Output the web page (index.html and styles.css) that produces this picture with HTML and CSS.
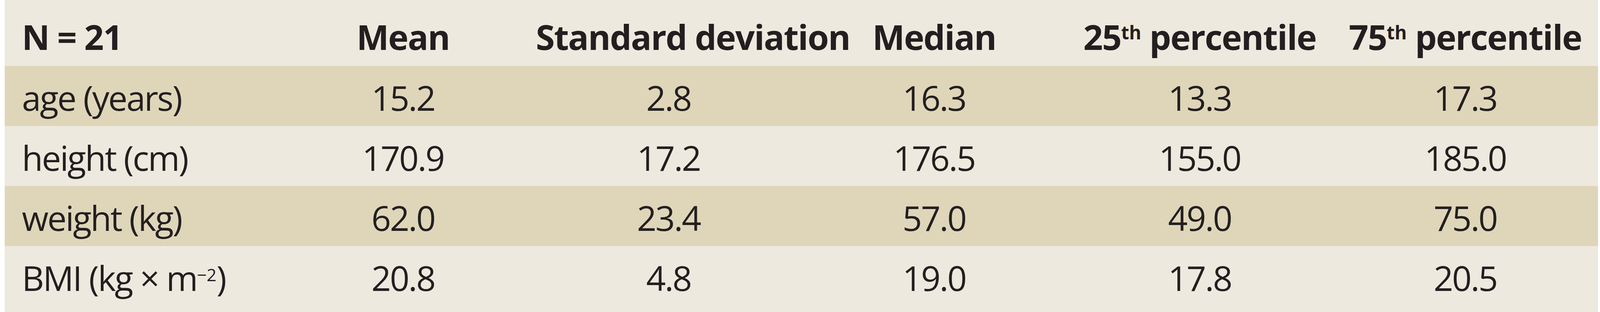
FILE: index.html
```html
<!DOCTYPE html>
<html lang="en">
<head>
<meta charset="utf-8">
<title>Descriptive statistics</title>
<link rel="stylesheet" href="styles.css">
</head>
<body>
<div class="stats">
  <div class="row head">
    <div class="cell first">N = 21</div>
    <div class="cell">Mean</div>
    <div class="cell">Standard deviation</div>
    <div class="cell">Median</div>
    <div class="cell">25<sup class="ord">th</sup> percentile</div>
    <div class="cell">75<sup class="ord">th</sup> percentile</div>
  </div>
  <div class="row shade">
    <div class="cell first">age (years)</div>
    <div class="cell">15.2</div>
    <div class="cell">2.8</div>
    <div class="cell">16.3</div>
    <div class="cell">13.3</div>
    <div class="cell">17.3</div>
  </div>
  <div class="row">
    <div class="cell first">height (cm)</div>
    <div class="cell">170.9</div>
    <div class="cell">17.2</div>
    <div class="cell">176.5</div>
    <div class="cell">155.0</div>
    <div class="cell">185.0</div>
  </div>
  <div class="row shade">
    <div class="cell first">weight (kg)</div>
    <div class="cell">62.0</div>
    <div class="cell">23.4</div>
    <div class="cell">57.0</div>
    <div class="cell">49.0</div>
    <div class="cell">75.0</div>
  </div>
  <div class="row">
    <div class="cell first">BMI (kg × m<sup class="exp">−2</sup>)</div>
    <div class="cell">20.8</div>
    <div class="cell">4.8</div>
    <div class="cell">19.0</div>
    <div class="cell">17.8</div>
    <div class="cell">20.5</div>
  </div>
</div>
</body>
</html>
```

FILE: styles.css
```css
html, body {
  margin: 0;
  padding: 0;
  background: #ffffff;
}

body {
  font-family: "Open Sans", "Noto Sans", sans-serif;
  color: #231f20;
}

.stats {
  margin: 0 5px 0 12px;
  height: 800px;
  background: #eee9de;
  overflow: hidden;
}

.row {
  display: grid;
  grid-template-columns: repeat(6, minmax(0, 1fr));
  height: 154px;
  box-sizing: border-box;
  padding-top: 37px;
  font-size: 88px;
  line-height: 88px;
  letter-spacing: -3px;
}

.row.head {
  height: 169px;
  padding-top: 50px;
  font-weight: 700;
  letter-spacing: -2px;
}

.row.shade {
  background: #dfd6b9;
}

.cell {
  text-align: center;
  white-space: nowrap;
}

.cell.first {
  text-align: left;
  padding-left: 44px;
}

.ord {
  font-size: 0.54em;
  line-height: 0;
  letter-spacing: 0;
  vertical-align: 27px;
}

.exp {
  font-size: 0.5em;
  line-height: 0;
  letter-spacing: 0;
  vertical-align: 25px;
}
```
